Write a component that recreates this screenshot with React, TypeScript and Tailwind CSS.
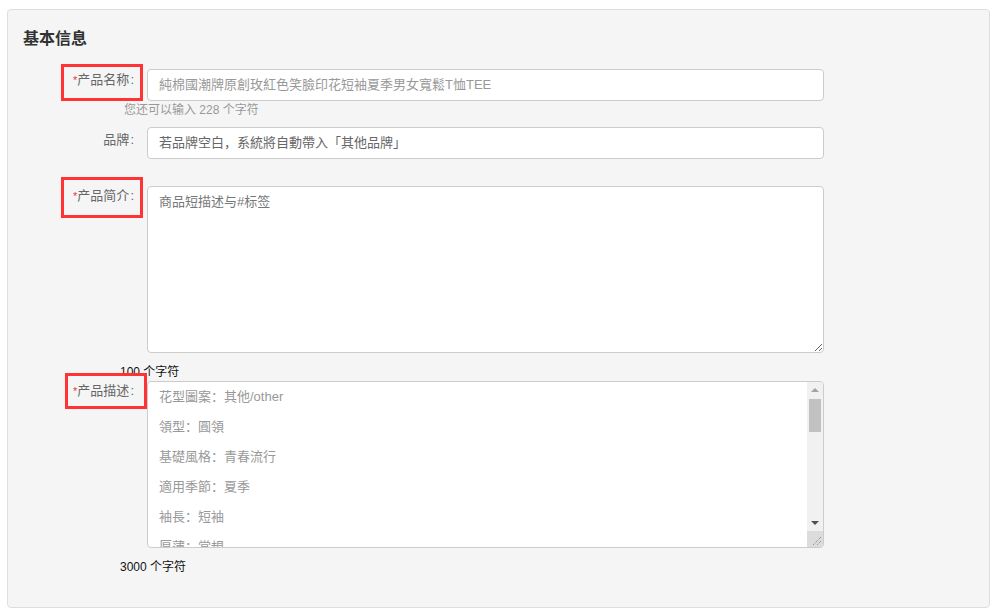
import React from "react";

const font = { fontFamily: '"Liberation Sans", "Noto Sans CJK SC", sans-serif' };

function Label({ text, required, pt }: { text: string; required?: boolean; pt: string }) {
  return (
    <div className={`w-[113px] shrink-0 text-right text-[13px] leading-[20px] text-[#666] ${pt}`}>
      {required && <span className="text-[11px] text-[#e4393c] align-top">*</span>}
      {text}
      <span className="ml-[1px] mr-[2px]">:</span>
    </div>
  );
}

export default function App() {
  const lines = ["花型圖案：其他/other", "領型：圓領", "基礎風格：青春流行", "適用季節：夏季", "袖長：短袖", "厚薄：常規"];
  return (
    <div className="w-[1000px] h-[616px] bg-white pl-[7px] pt-[9px]" style={font}>
      <div className="relative w-[983px] h-[599px] rounded-[4px] border border-[#dedede] bg-[#f5f5f5] pl-[15px] pt-[17px]">
        <h2 className="text-[16px] leading-[24px] font-bold text-[#333]">基本信息</h2>

        <div className="mt-[18px] flex gap-[11px]">
          <Label text="产品名称" required pt="pt-[1px]" />
          <div className="w-[677px] h-[32px] rounded-[4px] border border-[#ccc] bg-white px-[11px] text-[13px] leading-[30px] text-[#999] whitespace-nowrap">
            純棉國潮牌原創玫紅色笑臉印花短袖夏季男女寬鬆T恤TEE
          </div>
        </div>
        <div className="ml-[101px] text-[12px] leading-[18px] text-[#999]">您还可以输入 228 个字符</div>

        <div className="mt-[8px] flex gap-[11px]">
          <Label text="品牌" pt="pt-[3px]" />
          <div className="w-[677px] h-[32px] rounded-[4px] border border-[#ccc] bg-white px-[11px] text-[13px] leading-[30px] text-[#666] whitespace-nowrap">
            若品牌空白，系統將自動帶入「其他品牌」
          </div>
        </div>

        <div className="mt-[27px] flex gap-[11px]">
          <Label text="产品简介" required pt="pt-0" />
          <textarea
            readOnly
            defaultValue="商品短描述与#标签"
            className="block w-[677px] h-[167px] rounded-[4px] border border-[#ccc] bg-white px-[11px] pt-[5px] text-[13px] leading-[20px] text-[#777] outline-none"
            style={font}
          />
        </div>
        <div className="mt-[10px] ml-[97px] text-[12px] leading-[18px] text-[#111]">100 个字符</div>

        <div className="flex gap-[11px]">
          <Label text="产品描述" required pt="pt-0" />
          <div className="flex w-[677px] h-[167px] rounded-[4px] border border-[#ccc] bg-white overflow-hidden">
            <div className="flex-1 overflow-hidden px-[11px] text-[13px] leading-[30px] text-[#999]">
              {lines.map((l) => (
                <div key={l}>{l}</div>
              ))}
            </div>
            <div className="w-[16px] flex flex-col bg-[#f1f1f1]">
              <div className="h-[16px] flex items-center justify-center">
                <div className="w-0 h-0 border-l-[4px] border-r-[4px] border-b-[4px] border-l-transparent border-r-transparent border-b-[#a3a3a3]" />
              </div>
              <div className="flex-1 px-[2px] pt-[1px]">
                <div className="h-[33px] bg-[#c1c1c1]" />
              </div>
              <div className="h-[16px] flex items-center justify-center">
                <div className="w-0 h-0 border-l-[4px] border-r-[4px] border-t-[4px] border-l-transparent border-r-transparent border-t-[#505050]" />
              </div>
              <div className="h-[16px] bg-[#dcdcdc] relative">
                <svg width="16" height="16" className="absolute inset-0">
                  <line x1="14" y1="6" x2="6" y2="14" stroke="#777" strokeWidth="1" strokeDasharray="1 1" />
                  <line x1="14" y1="10" x2="10" y2="14" stroke="#777" strokeWidth="1" strokeDasharray="1 1" />
                </svg>
              </div>
            </div>
          </div>
        </div>
        <div className="mt-[10px] ml-[97px] text-[12px] leading-[18px] text-[#111]">3000 个字符</div>

        <div className="absolute left-[53px] top-[54px] w-[82px] h-[37px] border-[3px] border-[#f33]" />
        <div className="absolute left-[53px] top-[167px] w-[82px] h-[41px] border-[3px] border-[#f33]" />
        <div className="absolute left-[57px] top-[363px] w-[82px] h-[36px] border-[3px] border-[#f33]" />
      </div>
    </div>
  );
}
